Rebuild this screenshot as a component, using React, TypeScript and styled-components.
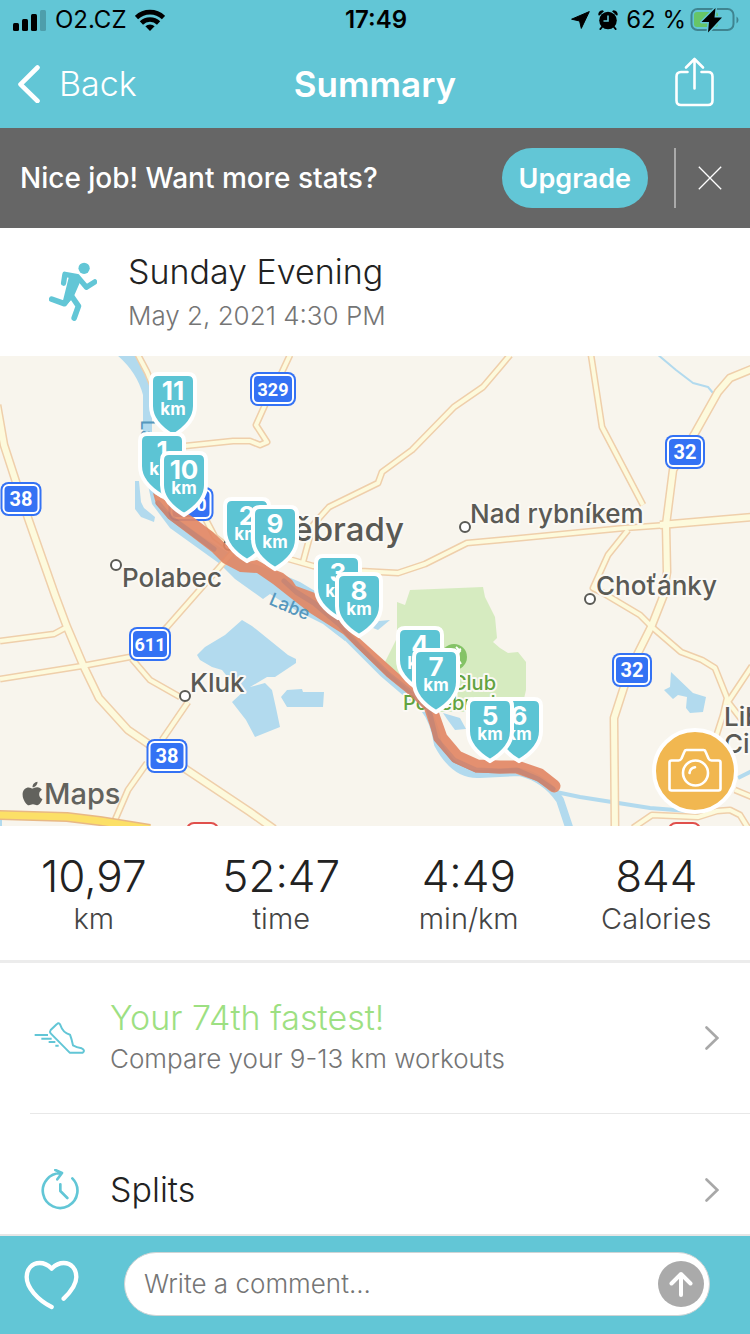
import React from "react";
import styled, { createGlobalStyle } from "styled-components";
import { FaApple } from "react-icons/fa";

const teal = "#62c6d6";
const fontStack = '"Inter", "Liberation Sans", sans-serif';

const GlobalStyle = createGlobalStyle`
  *, *::before, *::after { box-sizing: border-box; }
  body { margin: 0; background: #fff; font-family: ${fontStack}; color: #222; }
  button, input { font: inherit; color: inherit; }
  h1, h2, p, dl, dt, dd { margin: 0; font-weight: inherit; }
`;

const Screen = styled.div`
  display: flex;
  flex-direction: column;
  height: 100vh;
  overflow: hidden;
`;

const Header = styled.header`
  flex: none;
  background: ${teal};
`;

const StatusBar = styled.div`
  display: grid;
  grid-template-columns: 1fr auto 1fr;
  align-items: center;
  height: 40px;
  padding: 0 11px 0 13px;
  color: #000;
  font-size: 24px;
  line-height: 40px;
`;

const StatusGroup = styled.div<{ $end?: boolean }>`
  display: flex;
  align-items: center;
  justify-content: ${(p) => (p.$end ? "flex-end" : "flex-start")};
  gap: ${(p) => (p.$end ? 8 : 9)}px;
`;

const Battery = styled.span`
  display: flex;
  align-items: center;
  gap: 4px;
`;

const Clock = styled.time`
  font-weight: 600;
`;

const NavBar = styled.nav`
  display: grid;
  grid-template-columns: 1fr auto 1fr;
  align-items: center;
  height: 88px;
  padding: 0 16px;
  color: #fff;
`;

const PlainButton = styled.button`
  display: flex;
  align-items: center;
  padding: 0;
  border: 0;
  background: none;
  cursor: pointer;
`;

const BackButton = styled(PlainButton)`
  gap: 18px;
  font-size: 34px;
  font-weight: 300;
  line-height: 40px;
`;

const ShareButton = styled(PlainButton)`
  justify-self: end;
  padding: 0 20px 4px;
`;

const PageTitle = styled.h1`
  font-size: 35px;
  font-weight: 600;
  line-height: 40px;
`;

const Banner = styled.section`
  flex: none;
  display: flex;
  align-items: center;
  height: 100px;
  padding: 0 28px 0 20px;
  background: #666;
  color: #fff;
`;

const BannerText = styled.p`
  flex: 1;
  font-size: 28px;
  font-weight: 500;
  line-height: 32px;
`;

const UpgradeButton = styled.button`
  height: 60px;
  padding: 0 17px;
  border: 0;
  border-radius: 30px;
  background: ${teal};
  font-size: 27px;
  font-weight: 600;
  cursor: pointer;
`;

const BannerDivider = styled.span`
  width: 2px;
  height: 60px;
  margin: 0 22px 0 26px;
  background: #aaa;
`;

const Content = styled.main`
  flex: 1;
  min-height: 0;
  overflow: hidden;
  border-bottom: 2px solid #e6e6e6;
`;

const Activity = styled.section`
  display: flex;
  align-items: center;
  gap: 31px;
  height: 128px;
  padding: 0 49px;
`;

const ActivityText = styled.div`
  display: flex;
  flex-direction: column;
  gap: 8px;
`;

const ActivityName = styled.h2`
  font-size: 34px;
  font-weight: 300;
  line-height: 40px;
`;

const Muted = styled.p`
  color: #757575;
  font-size: 26px;
  font-weight: 300;
  line-height: 32px;
`;

const MapArea = styled.section`
  position: relative;
  height: 470px;
`;

const MapSvg = styled.svg`
  display: block;
  width: 100%;
  height: 100%;
  background: #f8f5ed;
  font-family: ${fontStack};
`;

const CameraButton = styled.button`
  position: absolute;
  right: 12px;
  bottom: 12px;
  width: 86px;
  height: 86px;
  display: grid;
  place-items: center;
  padding: 0;
  border: 4px solid #fff;
  border-radius: 50%;
  background: #f1b750;
  cursor: pointer;
`;

const Stats = styled.dl`
  display: grid;
  grid-template-columns: repeat(4, 1fr);
  height: 137px;
  padding-top: 26px;
  border-bottom: 3px solid #ececec;
  text-align: center;
`;

const Stat = styled.div`
  display: flex;
  flex-direction: column-reverse;
  justify-content: flex-end;
`;

const StatValue = styled.dd`
  font-size: 44px;
  font-weight: 300;
  line-height: 48px;
`;

const StatLabel = styled.dt`
  color: #444;
  font-size: 29px;
  font-weight: 300;
  line-height: 38px;
`;

const LinkRow = styled.a<{ $divided?: boolean }>`
  display: flex;
  align-items: center;
  height: ${(p) => (p.$divided ? 151 : 152)}px;
  margin-left: 30px;
  padding-right: 31px;
  border-bottom: ${(p) => (p.$divided ? "1px solid #e8e8e8" : "0")};
  color: inherit;
  text-decoration: none;
`;

const RowIcon = styled.span`
  flex: none;
  display: grid;
  place-items: center;
  width: 60px;
  margin-right: 20px;
`;

const RowText = styled.div<{ $stacked?: boolean }>`
  flex: 1;
  display: flex;
  flex-direction: column;
  gap: 3px;
  padding-bottom: ${(p) => (p.$stacked ? 6 : 0)}px;
`;

const RowTitle = styled.h2<{ $highlight?: boolean }>`
  color: ${(p) => (p.$highlight ? "#9de082" : "#222")};
  font-size: 34px;
  font-weight: 300;
  line-height: 44px;
`;

const CommentBar = styled.form`
  flex: none;
  display: flex;
  align-items: center;
  gap: 45px;
  height: 98px;
  padding: 0 40px 0 24px;
  background: ${teal};
`;

const CommentField = styled.div`
  flex: 1;
  display: flex;
  align-items: center;
  height: 64px;
  margin-bottom: 2px;
  padding: 0 5px 0 19px;
  border: 1px solid #cfd4d5;
  border-radius: 32px;
  background: #fff;
`;

const CommentInput = styled.input`
  flex: 1;
  min-width: 0;
  padding: 0 0 2px;
  border: 0;
  outline: 0;
  background: none;
  font-size: 26px;
  font-weight: 300;
  &::placeholder { color: #757575; opacity: 1; }
`;

const SendButton = styled(PlainButton)`
  justify-content: center;
  width: 46px;
  height: 46px;
  border-radius: 50%;
  background: #aaa;
`;

const SignalIcon = () => (
  <svg width="33" height="21" viewBox="0 0 33 21" aria-hidden="true">
    <rect x="0" y="13" width="6" height="8" rx="1.5" />
    <rect x="9" y="9" width="6" height="12" rx="1.5" />
    <rect x="18" y="4" width="6" height="17" rx="1.5" />
    <rect x="27" y="0" width="6" height="21" rx="1.5" fill="#4e9eab" />
  </svg>
);

const WifiIcon = () => (
  <svg width="30" height="22" viewBox="0 0 30 22" fill="none" stroke="#000" strokeWidth="4.600" aria-hidden="true">
    <path d="M1.500 8.600a19.500 19.500 0 0 1 27 0" />
    <path d="M6.400 14a12.300 12.300 0 0 1 17.200 0" />
    <path d="M15 22l-4.600-4.700a6.600 6.600 0 0 1 9.200 0z" fill="#000" stroke="none" />
  </svg>
);

const LocationIcon = () => (
  <svg width="19" height="18" viewBox="0 0 19 18" aria-hidden="true">
    <path d="M18.300.6L10.300 17.400 8.600 10 .6 8.200z" stroke="#000" strokeLinejoin="round" />
  </svg>
);

const AlarmIcon = () => (
  <svg width="20" height="20" viewBox="0 0 20 20" aria-hidden="true">
    <circle cx="10" cy="10.500" r="8.800" />
    <path d="M.3 5.200Q0 1 4.500.3L6 1.300 1.500 5.600zM19.700 5.200Q20 1 15.500.3L14 1.300 18.500 5.600z" />
    <path d="M4 17l-1.600 2M16 17l1.600 2" stroke="#000" strokeWidth="2" strokeLinecap="round" />
    <path d="M10 5.500V11H5.500" stroke={teal} strokeWidth="1.600" fill="none" />
  </svg>
);

const BatteryIcon = () => (
  <svg width="49" height="26" viewBox="0 0 49 26" aria-hidden="true">
    <rect x="1.500" y="2" width="42" height="21" rx="6" fill="none" stroke="#3f8490" strokeWidth="2" />
    <path d="M46.500 9.500q2 1 2 3.500t-2 3.500z" fill="#3f8490" />
    <rect x="4" y="5" width="24" height="15" rx="3" fill="#67c567" />
    <path d="M25.500 1L11.500 15h7.500l-1 10.500L32 10.500h-7.500z" fill="#000" stroke={teal} strokeWidth="3" strokeLinejoin="round" paintOrder="stroke" />
  </svg>
);

const BackIcon = () => (
  <svg width="25" height="38" viewBox="0 0 25 38" fill="none" stroke="#fff" strokeWidth="4.600" strokeLinecap="round" strokeLinejoin="round" aria-hidden="true">
    <path d="M21.500 2.500L4.500 19.300 21.500 36" />
  </svg>
);

const ShareIcon = () => (
  <svg width="40" height="50" viewBox="0 0 40 50" fill="none" stroke="#fff" strokeWidth="2.600" strokeLinecap="round" strokeLinejoin="round" aria-hidden="true">
    <path d="M13.500 15H7q-4.500 0-4.500 4.500v24Q2.500 48 7 48h27q4.500 0 4.500-4.500v-24Q38.500 15 34 15h-6.500" />
    <path d="M20.500 31.500V2M12 10.500L20.500 2 29 10.500" />
  </svg>
);

const CloseIcon = () => (
  <svg width="24" height="24" viewBox="0 0 24 24" stroke="#fff" strokeWidth="1.300" aria-hidden="true">
    <path d="M.8.800l22.400 22.400M23.200.800L.8 23.200" />
  </svg>
);

const RunnerIcon = () => (
  <svg width="48" height="60" viewBox="147 99 145 181" fill="none" stroke={teal} strokeLinecap="round" strokeLinejoin="round" aria-hidden="true">
    <circle cx="253" cy="118" r="17" fill={teal} stroke="none" />
    <path d="M191 163l4-27 38 7 27 32 25-16" strokeWidth="16" />
    <path d="M216 145l18 8-22 50-14 14z" strokeWidth="18" fill={teal} />
    <path d="M208 205l-14 20-39-14M214 200l22 32-13 36" strokeWidth="17" />
  </svg>
);

const ShoeIcon = () => (
  <svg width="52" height="32" viewBox="103 127 156 96" fill="none" stroke={teal} strokeWidth="6" strokeLinejoin="round" aria-hidden="true">
    <path d="M153 151L171 134Q178 127 182 136 190 160 211 165 216 178 220 197 230 203 246 206 258 212 249 219H210L153 161Q149 156 153 151Z" />
    <path d="M105 166h40M125 177h31M147 187h20M167 198h10" />
  </svg>
);

const SplitsIcon = () => (
  <svg width="40" height="42" viewBox="120 571 120 126" fill="none" stroke={teal} strokeWidth="8" strokeLinecap="round" strokeLinejoin="round" aria-hidden="true">
    <path d="M217 599A52 52 0 1 1 184 584M166 574l20 9-14 19M181 617v20l21 21" />
  </svg>
);

const Chevron = () => (
  <svg width="14" height="24" viewBox="0 0 14 24" fill="none" stroke="#a8a8a8" strokeWidth="2.600" strokeLinecap="round" aria-hidden="true">
    <path d="M1.500 1.500L12.300 12 1.500 22.500" />
  </svg>
);

const HeartIcon = () => (
  <svg width="55" height="50" viewBox="74 837 165 150" fill="none" stroke="#fff" strokeWidth="13" strokeLinecap="round" strokeLinejoin="round" aria-hidden="true">
    <path d="M193 953C222 925 231 905 231 888 231 865 217 846 193 846 173 846 165 855 157 863 149 855 141 846 121 846 97 846 82 865 82 888 82 920 115 957 157 978" />
  </svg>
);

const SendIcon = () => (
  <svg width="24" height="28" viewBox="0 0 24 28" fill="none" stroke="#fff" strokeWidth="4" strokeLinecap="round" strokeLinejoin="round" aria-hidden="true">
    <path d="M12 25V4M2.500 13.500L12 4l9.500 9.500" />
  </svg>
);

const CameraIcon = () => (
  <svg width="54" height="46" viewBox="0 0 54 46" fill="none" stroke="#fff" strokeWidth="2.600" strokeLinejoin="round" strokeLinecap="round" aria-hidden="true">
    <path d="M3.500 12.500h7q2 0 3-2l3-7q.5-1.500 2-1.500h17q1.500 0 2 1.500l3 7q1 2 3 2h7q2 0 2 2v26q0 2-2 2h-47q-2 0-2-2v-26q0-2 2-2z" />
    <circle cx="27.500" cy="25" r="12.500" />
    <path d="M21.500 25q.5-5 5.500-5.800" />
  </svg>
);

const minorRoads = [
  "M0 641L54 634 67 627",
  "M0 679L82 666 130 657 150 645 167 627 232 553",
  "M132 659L150 680 180 697 M188 702L162 740 M147 763L128 790 115 820",
  "M290 355L282 372 265 405 256 425 267 442 260 445 250 441 233 441 185 446",
  "M137 353L147 372 167 420",
  "M205 518L215 537 232 550",
  "M510 355L500 367 483 387 454 407 412 450 382 472 378 483 329 507 313 525 303 562",
  "M285 558L313 566 360 571 398 573 425 564 467 543 500 540 625 528 667 525",
  "M591 355L602 427 643 505",
  "M628 530L608 555 593 588 603 593 640 615 652 627 681 652 702 660 715 668 727 698 723 715 715 740",
  "M752 666L728 702 742 720",
  "M633 828L652 815 698 817 717 811 730 810 740 815 748 828 M735 790L752 797",
];

const majorRoads = [
  "M-3 405L0 422 4 445 17 485 28 518 55 595 67 627 84 667 99 698 128 730 150 745 187 770 250 812 274 829",
  "M752 369L730 378 718 392 695 433 673 470 666 525 667 572 663 597 652 625 638 653 624 687 614 718 615 830",
  "M660 525L752 517",
];

const water = [
  "M117 355L137 355Q150 375 152 395V440L151 480 158 505 200 535 240 560Q270 568 300 582L330 600 345 618V641L323 624 297 611 270 594 263 599 235 579 220 564 170 528 152 504 147 480V455L143 430V395Q137 372 117 355Z",
  "M135 481h4l2 21 3 6 11 9-1 5-13-5-6-8z",
  "M197 655L205 647 225 635 242 620 252 626 288 655 296 659V663L275 677 267 677 250 687 265 683 272 690 276 708 280 727 255 737 246 720 232 702 245 690 230 680 222 670 212 667 200 660Z",
  "M281 697L287 690 302 689 303 692H324L323 707H287Z",
  "M671 672L693 693 706 697 703 712 690 713 686 708 687 697 678 695 673 699 664 690 670 687Z",
  "M390 620L378 630 373 628 379 621Z",
  "M443 713L460 718 466 729 455 730 447 719Z",
  "M0 820h2v8H0z",
];

const routeUpper = "M153 493L193 517 213 532 230 548 247 562 257 560 273 569 283 573 292 580 296 586 315 593 337 617 358 637 398 673 418 692 408 694 387 677 343 634 310 613 292 599 273 584 257 573 240 572 223 563 212 552 170 520 156 504Z";
const routeLower = "M405 682L413 689 430 706 434 718 441 738 457 757 477 766 500 767 517 767 540 775 554 786";
const routeShade = "M158 503L170 517 214 549M284 581L296 592 314 603 340 625 358 645 388 674 413 694 429 710 436 739 454 760 476 770 500 771 517 770 538 779 553 789";

type Shield = { label: string; x: number; y: number; w: number };
const shields: Shield[] = [
  { label: "38", x: 21, y: 499, w: 41 },
  { label: "329", x: 273, y: 389, w: 46 },
  { label: "32", x: 685, y: 452, w: 40 },
  { label: "330", x: 191, y: 504, w: 45 },
  { label: "611", x: 150, y: 644, w: 42 },
  { label: "32", x: 632, y: 670, w: 40 },
  { label: "38", x: 167, y: 756, w: 41 },
];

const places = [
  { name: "Polabec", x: 122, y: 587 },
  { name: "Nad rybníkem", x: 470, y: 523 },
  { name: "Choťánky", x: 596, y: 595 },
  { name: "Kluk", x: 190, y: 692 },
  { name: "Libice nad", x: 724, y: 726 },
  { name: "Cidlinou", x: 724, y: 753 },
];

const dots = [[116, 565], [465, 527], [590, 599], [185, 696], [229, 545]];

const kmPins = [
  { km: 11, x: 173, y: 372 },
  { km: 1, x: 162, y: 432 },
  { km: 10, x: 184, y: 451 },
  { km: 2, x: 247, y: 497 },
  { km: 9, x: 275, y: 505 },
  { km: 3, x: 338, y: 554 },
  { km: 8, x: 359, y: 572 },
  { km: 4, x: 420, y: 626 },
  { km: 7, x: 436, y: 648 },
  { km: 6, x: 519, y: 697 },
  { km: 5, x: 490, y: 697 },
];

const RoadShield = ({ label, x, y, w }: Shield) => (
  <g>
    <rect x={x - w / 2} y={y - 17} width={w} height="34" rx="8" fill="#3472f4" />
    <rect x={x - w / 2 + 3} y={y - 14} width={w - 6} height="28" rx="5" fill="none" stroke="#fff" strokeWidth="2" />
    <text x={x} y={y + 7} textAnchor="middle" fontFamily="Roboto, sans-serif" fontSize={label.length > 2 ? 18 : 20} fontWeight="700" fill="#fff">{label}</text>
  </g>
);

const KmPin = ({ km, x, y }: { km: number; x: number; y: number }) => (
  <g transform={`translate(${x} ${y})`} fontWeight="700" fill="#fff" textAnchor="middle">
    <path d="M-22 9Q-22 2-15 2H15Q22 2 22 9V34C22 48 10 58 0 64-10 58-22 48-22 34Z" fill="#5cc4d4" stroke="#fff" strokeWidth="4" />
    <text y="28" fontSize="26">{km}</text>
    <text y="43" fontSize="17">km</text>
  </g>
);

const RouteMap = () => (
  <MapSvg viewBox="0 356 750 470" preserveAspectRatio="xMidYMid slice" role="img" aria-label="Route map">
    <path d="M410 590L483 587 485 597 495 617 497 638 493 642 500 648 508 653 518 652 526 662V690L521 712H440L385 662 397 638V602L405 605Z" fill="#d6ebc0" />
    <g fill="#b2daee">
      {water.map((d) => <path key={d} d={d} />)}
    </g>
    <g fill="none" stroke="#b2daee" strokeLinejoin="round">
      <path d="M335 628L345 635 383 673 424 708Q434 720 438 744 455 776 480 774L520 772Q545 778 560 800L570 830" strokeWidth="8" />
      <path d="M556 792L580 797 650 808 700 812M738 778L752 771" strokeWidth="4" />
      <path d="M657 354L676 370 693 383 708 387 713 393" strokeWidth="2" />
    </g>
    <g fill="none" strokeLinejoin="round">
      <g stroke="#efcfab">
        {minorRoads.map((d) => <path key={d} d={d} strokeWidth="7" />)}
        {majorRoads.map((d) => <path key={d} d={d} strokeWidth="9" />)}
      </g>
      <g stroke="#fdfadc">
        {minorRoads.map((d) => <path key={d} d={d} strokeWidth="4" />)}
        {majorRoads.map((d) => <path key={d} d={d} strokeWidth="6" />)}
      </g>
      <path d="M-4 815L67 817 100 821 150 829" stroke="#e8b884" strokeWidth="10" />
      <path d="M-4 815L67 817 100 821 150 829" stroke="#fce067" strokeWidth="7" />
    </g>
    <g fill="#fff" stroke="#e0504c" strokeWidth="2">
      <rect x="187" y="823" width="31" height="30" rx="7" />
      <rect x="669" y="823" width="31" height="30" rx="7" />
    </g>
    {shields.map((s) => <RoadShield key={`${s.label}-${s.x}`} {...s} />)}
    <g fill="#fff" stroke="#5a5a55" strokeWidth="2">
      {dots.map(([cx, cy]) => <circle key={cx} cx={cx} cy={cy} r="5" />)}
    </g>
    <circle cx="454" cy="657" r="13" fill="#84c366" />
    <path d="M456 647l4 4-4 5 5 8M455 652l6-3" fill="none" stroke="#fff" strokeWidth="2" />
    <g fontWeight="500" stroke="#fbf9f4" strokeWidth="4" strokeLinejoin="round" paintOrder="stroke">
      <g fontSize="26" fill="#5a5a55">
        {places.map((p) => <text key={p.name} x={p.x} y={p.y}>{p.name}</text>)}
        <text x="404" y="541" textAnchor="end" fontSize="33">Poděbrady</text>
      </g>
      <g fontSize="20" fill="#62a33f">
        <text x="496" y="690" textAnchor="end">Club</text>
        <text x="403" y="710">Poděbrady</text>
      </g>
    </g>
    <g fill="none" strokeLinejoin="round" strokeLinecap="round" opacity="0.900">
      <path d={routeUpper} fill="#e28663" />
      <path d={routeLower} stroke="#e28663" strokeWidth="13" />
      <path d={routeShade} stroke="#cc7e67" strokeWidth="5" />
    </g>
    <g fontSize="18" fill="#5597bd" fontWeight="500">
      <text transform="translate(268 604) rotate(23)">Labe</text>
      <text transform="translate(141 420) rotate(90)">Labe</text>
    </g>
    <g fill="#62625d">
      <FaApple x={19} y={780} size={27} color="#62625d" />
      <text x="44" y="804" fontSize="29" fontWeight="500">Maps</text>
    </g>
    {kmPins.map((p) => <KmPin key={p.km} {...p} />)}
  </MapSvg>
);

const stats = [
  { value: "10,97", label: "km" },
  { value: "52:47", label: "time" },
  { value: "4:49", label: "min/km" },
  { value: "844", label: "Calories" },
];

export default function App() {
  return (
    <>
      <GlobalStyle />
      <Screen>
        <Header>
          <StatusBar>
            <StatusGroup>
              <SignalIcon />
              <span>O2.CZ</span>
              <WifiIcon />
            </StatusGroup>
            <Clock>17:49</Clock>
            <StatusGroup $end>
              <LocationIcon />
              <AlarmIcon />
              <Battery>
                <span>62 %</span>
                <BatteryIcon />
              </Battery>
            </StatusGroup>
          </StatusBar>
          <NavBar>
            <BackButton type="button"><BackIcon />Back</BackButton>
            <PageTitle>Summary</PageTitle>
            <ShareButton type="button" aria-label="Share"><ShareIcon /></ShareButton>
          </NavBar>
        </Header>
        <Banner>
          <BannerText>Nice job! Want more stats?</BannerText>
          <UpgradeButton type="button">Upgrade</UpgradeButton>
          <BannerDivider />
          <PlainButton type="button" aria-label="Dismiss"><CloseIcon /></PlainButton>
        </Banner>
        <Content>
          <Activity>
            <RunnerIcon />
            <ActivityText>
              <ActivityName>Sunday Evening</ActivityName>
              <Muted>May 2, 2021 4:30 PM</Muted>
            </ActivityText>
          </Activity>
          <MapArea>
            <RouteMap />
            <CameraButton type="button" aria-label="Add photo"><CameraIcon /></CameraButton>
          </MapArea>
          <Stats>
            {stats.map((s) => (
              <Stat key={s.label}>
                <StatLabel>{s.label}</StatLabel>
                <StatValue>{s.value}</StatValue>
              </Stat>
            ))}
          </Stats>
          <LinkRow href="#compare" $divided>
            <RowIcon><ShoeIcon /></RowIcon>
            <RowText $stacked>
              <RowTitle $highlight>Your 74th fastest!</RowTitle>
              <Muted>Compare your 9-13 km workouts</Muted>
            </RowText>
            <Chevron />
          </LinkRow>
          <LinkRow href="#splits">
            <RowIcon><SplitsIcon /></RowIcon>
            <RowText><RowTitle>Splits</RowTitle></RowText>
            <Chevron />
          </LinkRow>
        </Content>
        <CommentBar>
          <PlainButton type="button" aria-label="Like"><HeartIcon /></PlainButton>
          <CommentField>
            <CommentInput type="text" aria-label="Comment" placeholder="Write a comment..." />
            <SendButton type="submit" aria-label="Send"><SendIcon /></SendButton>
          </CommentField>
        </CommentBar>
      </Screen>
    </>
  );
}
